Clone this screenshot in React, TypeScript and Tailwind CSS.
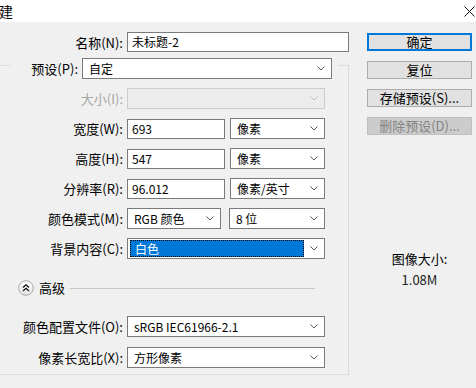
import React from "react";

function Chevron({ disabled = false }: { disabled?: boolean }) {
  return (
    <svg width="8" height="5" viewBox="0 0 8 5" className="shrink-0">
      <polyline
        points="0.5,0.5 4,4 7.5,0.5"
        fill="none"
        stroke={disabled ? "#c0c0c0" : "#5a5a5a"}
        strokeWidth="1"
      />
    </svg>
  );
}

function Select({
  value,
  w,
  disabled = false,
}: {
  value: string;
  w: string;
  disabled?: boolean;
}) {
  return (
    <div
      className={`${w} h-[21px] flex items-center border ${
        disabled ? "border-[#cccccc] bg-[#ececec]" : "border-[#7a7a7a] bg-white"
      }`}
    >
      <span className="flex-1 pl-[6px] text-[12px] leading-[19px] whitespace-nowrap overflow-hidden">
        {value}
      </span>
      <span className="mr-[6px] flex items-center">
        <Chevron disabled={disabled} />
      </span>
    </div>
  );
}

function Input({ value, w }: { value: string; w: string }) {
  return (
    <div
      className={`${w} h-[20px] mt-[1px] border border-[#7a7a7a] bg-white pl-[4px] text-[12px] leading-[18px] whitespace-nowrap`}
    >
      {value}
    </div>
  );
}

function Label({ text, disabled = false }: { text: string; disabled?: boolean }) {
  return (
    <div
      className={`w-[123px] shrink-0 text-right text-[13px] leading-[21px] mr-[4px] whitespace-nowrap ${
        disabled ? "text-[#a6a6a6]" : "text-black"
      }`}
    >
      {text}
    </div>
  );
}

function Button({
  text,
  primary = false,
  disabled = false,
  className = "",
}: {
  text: string;
  primary?: boolean;
  disabled?: boolean;
  className?: string;
}) {
  const base = "w-[105px] h-[18px] flex items-center justify-center text-[13px] leading-[16px] whitespace-nowrap";
  const style = disabled
    ? "bg-[#cccccc] border border-[#bfbfbf] text-[#838383]"
    : primary
    ? "bg-[#e1e1e1] border-2 border-[#0078d7] text-black"
    : "bg-[#e1e1e1] border border-[#adadad] text-black";
  return <div className={`${base} ${style} ${className}`}>{text}</div>;
}

export default function App() {
  return (
    <div className="w-[476px] h-[388px] bg-[#f0f0f0] overflow-hidden flex flex-col font-['Noto_Sans_CJK_SC',sans-serif] text-black">
      {/* Title bar */}
      <div className="h-[22px] bg-white flex items-center justify-between shrink-0">
        <span className="text-[14px] leading-[22px] -ml-[1px]">建</span>
        <svg width="11" height="11" viewBox="0 0 11 11" className="mr-[1px]">
          <line x1="0.5" y1="0.5" x2="10.5" y2="10.5" stroke="#111" strokeWidth="1" />
          <line x1="10.5" y1="0.5" x2="0.5" y2="10.5" stroke="#111" strokeWidth="1" />
        </svg>
      </div>

      <div className="flex flex-row flex-1">
        {/* Left side */}
        <div className="w-[349px] shrink-0 flex flex-col">
          <div className="mt-[10px] flex h-[21px]">
            <Label text="名称(N):" />
            <div className="w-[224px] h-[20px] border border-[#7a7a7a] bg-white pl-[4px] text-[12px] leading-[18px]">
              未标题-2
            </div>
          </div>

          {/* Group box */}
          <div className="mt-[12px] w-[349px] h-[310px] border-t border-r border-b border-[#dcdcdc] flex flex-col">
            <div className="-mt-[8px] ml-[11px] w-[327px] h-[21px] flex bg-[#f0f0f0]">
              <div className="w-[67px] shrink-0 text-right text-[13px] leading-[21px] mr-[4px] whitespace-nowrap">
                预设(P):
              </div>
              <Select value="自定" w="w-[250px]" />
            </div>

            <div className="mt-[9px] flex items-start h-[21px]">
              <Label text="大小(I):" disabled />
              <Select value="" w="w-[198px]" disabled />
            </div>

            <div className="mt-[9px] flex items-start h-[21px]">
              <Label text="宽度(W):" />
              <Input value="693" w="w-[98px]" />
              <div className="ml-[5px]">
                <Select value="像素" w="w-[95px]" />
              </div>
            </div>

            <div className="mt-[9px] flex items-start h-[21px]">
              <Label text="高度(H):" />
              <Input value="547" w="w-[98px]" />
              <div className="ml-[5px]">
                <Select value="像素" w="w-[95px]" />
              </div>
            </div>

            <div className="mt-[9px] flex items-start h-[21px]">
              <Label text="分辨率(R):" />
              <Input value="96.012" w="w-[98px]" />
              <div className="ml-[5px]">
                <Select value="像素/英寸" w="w-[95px]" />
              </div>
            </div>

            <div className="mt-[9px] flex items-start h-[21px]">
              <Label text="颜色模式(M):" />
              <Select value="RGB 颜色" w="w-[94px]" />
              <div className="ml-[8px]">
                <Select value="8 位" w="w-[96px]" />
              </div>
            </div>

            <div className="mt-[9px] flex items-start h-[21px]">
              <Label text="背景内容(C):" />
              <div className="w-[198px] h-[21px] flex items-center border border-[#7a7a7a] bg-white">
                <div className="ml-[2px] w-[174px] h-[17px] bg-[#0078d7] border border-dotted border-black text-white text-[12px] leading-[15px] pl-[4px]">
                  白色
                </div>
                <span className="flex-1" />
                <span className="mr-[6px] flex items-center">
                  <Chevron />
                </span>
              </div>
            </div>

            {/* Advanced */}
            <div className="mt-[21px] h-[16px] flex items-center">
              <svg width="16" height="16" viewBox="0 0 16 16" className="ml-[18px] shrink-0">
                <defs>
                  <linearGradient id="adv" x1="0" y1="0" x2="0" y2="1">
                    <stop offset="0" stopColor="#ffffff" />
                    <stop offset="1" stopColor="#e4e4e4" />
                  </linearGradient>
                </defs>
                <circle cx="8" cy="8" r="7.3" fill="url(#adv)" stroke="#a9a9a9" strokeWidth="1" />
                <polyline points="5,7.5 8,4.8 11,7.5" fill="none" stroke="#111" strokeWidth="1.3" />
                <polyline points="5,11 8,8.3 11,11" fill="none" stroke="#111" strokeWidth="1.3" />
              </svg>
              <span className="ml-[5px] text-[13px] leading-[16px] whitespace-nowrap">高级</span>
              <div className="ml-[5px] mr-[33px] flex-1 h-px bg-[#c8c8c8]" />
            </div>

            <div className="mt-[20px] flex items-start h-[21px]">
              <Label text="颜色配置文件(O):" />
              <Select value="sRGB IEC61966-2.1" w="w-[198px]" />
            </div>

            <div className="mt-[10px] flex items-start h-[21px]">
              <Label text="像素长宽比(X):" />
              <Select value="方形像素" w="w-[198px]" />
            </div>
          </div>
        </div>

        {/* Right side */}
        <div className="flex-1 flex flex-col pl-[18px] pt-[11px]">
          <Button text="确定" primary />
          <Button text="复位" className="mt-[10px]" />
          <Button text="存储预设(S)..." className="mt-[10px]" />
          <Button text="删除预设(D)..." disabled className="mt-[10px]" />
          <div className="w-[105px] mt-[115px] text-center text-[13px] leading-[18px] whitespace-nowrap">
            图像大小:
          </div>
          <div className="w-[105px] mt-[3px] text-center text-[13px] leading-[18px] text-[#222]">
            1.08M
          </div>
        </div>
      </div>
    </div>
  );
}
